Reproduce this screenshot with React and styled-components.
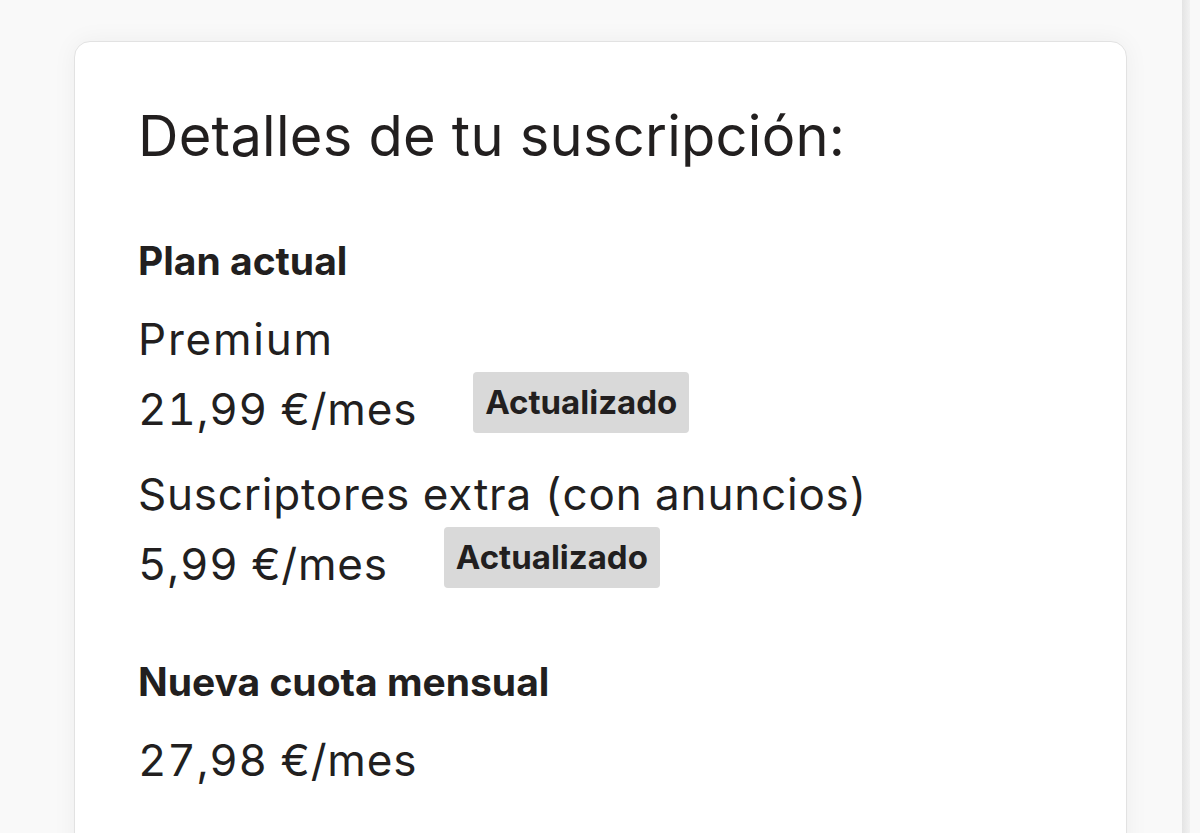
import styled, { createGlobalStyle } from "styled-components";

const GlobalStyle = createGlobalStyle`
  body {
    margin: 0;
    background: #f9f9f9;
    font-family: Inter, "Liberation Sans", sans-serif;
    color: #221f1f;
  }
`;

const Page = styled.div`
  display: flex;
  align-items: flex-start;
  height: 833px;
  overflow: hidden;
  padding: 41px 0 0 74px;
  box-sizing: border-box;
  gap: 55px;
`;

const Card = styled.div`
  width: 1053px;
  min-height: 900px;
  box-sizing: border-box;
  background: #fff;
  border: 1px solid #e2e2e2;
  border-radius: 16px;
  box-shadow: 0 0 24px rgba(0, 0, 0, 0.05);
  padding: 61px 0 0 63px;
  flex-shrink: 0;
`;

const Scrollbar = styled.div`
  width: 8px;
  height: 833px;
  margin-top: -41px;
  background: linear-gradient(to right, #e4e4e4, #f2f2f2);
  flex-shrink: 0;
`;

const Title = styled.h1`
  margin: 0;
  font-size: 56px;
  line-height: 67px;
  font-weight: 400;
  letter-spacing: 0.25px;
`;

const Label = styled.h2`
  margin: ${(p) => p.$top}px 0 20px;
  font-size: 39px;
  line-height: 46px;
  font-weight: 700;
  letter-spacing: 0;
`;

const Line = styled.div`
  font-size: 44px;
  line-height: 70px;
  letter-spacing: ${(p) => p.$track || 0.8}px;
  margin-top: ${(p) => p.$top || 0}px;
  font-feature-settings: "tnum";
`;

const PriceRow = styled.div`
  display: flex;
  align-items: center;
  height: 70px;
  font-size: 44px;
  letter-spacing: 0.8px;
  font-feature-settings: "tnum";
  gap: 56px;
`;

const Badge = styled.span`
  display: inline-flex;
  align-items: center;
  height: 61px;
  padding: 0 12px;
  box-sizing: border-box;
  background: #d9d9d9;
  border-radius: 4px;
  font-size: 33px;
  font-weight: 700;
  letter-spacing: 0;
  font-feature-settings: normal;
  margin-bottom: 14px;
`;

export default function App() {
  return (
    <>
      <GlobalStyle />
      <Page>
        <Card>
          <Title>Detalles de tu suscripción:</Title>
          <Label $top={68}>Plan actual</Label>
          <Line $track={1.8}>Premium</Line>
          <PriceRow>
            <span>21,99 €/mes</span>
            <Badge>Actualizado</Badge>
          </PriceRow>
          <Line $top={15}>Suscriptores extra (con anuncios)</Line>
          <PriceRow>
            <span>5,99 €/mes</span>
            <Badge>Actualizado</Badge>
          </PriceRow>
          <Label $top={60}>Nueva cuota mensual</Label>
          <Line>27,98 €/mes</Line>
        </Card>
        <Scrollbar />
      </Page>
    </>
  );
}
